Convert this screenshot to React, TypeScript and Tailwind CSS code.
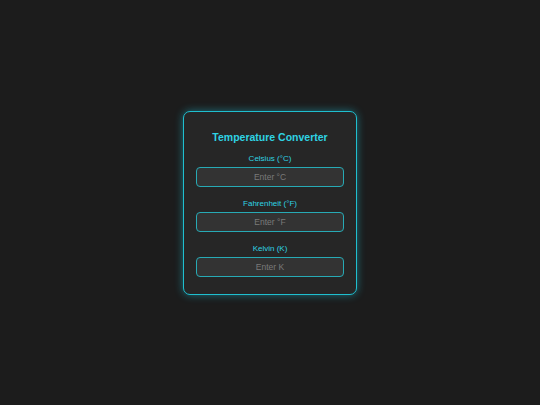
import React from 'react';

const FIELDS = [
  { label: 'Celsius (°C)', placeholder: 'Enter °C' },
  { label: 'Fahrenheit (°F)', placeholder: 'Enter °F' },
  { label: 'Kelvin (K)', placeholder: 'Enter K' },
];

export default function App() {
  return (
    <div
      className="min-h-screen w-full bg-[#1c1c1c] flex items-center justify-center"
      style={{ fontFamily: '"Liberation Sans", Arial, sans-serif' }}
    >
      <div className="w-[174px] rounded-[7px] border-[1.5px] border-[#1fbfcf] bg-[#262626] px-[12px] pt-[19px] pb-[17px] shadow-[0_0_8px_rgba(34,211,238,0.45)]">
        <h1 className="text-center text-[10.5px] leading-[13px] font-bold text-[#2fd3e3]">Temperature Converter</h1>

        <div className="mt-[10px] flex flex-col gap-[12px]">
          {FIELDS.map(f => (
            <div key={f.label} className="flex flex-col items-stretch">
              <label className="text-center text-[8px] leading-[10px] text-[#2fd3e3]">{f.label}</label>
              <input
                placeholder={f.placeholder}
                className="mt-[3px] h-[20px] w-full rounded-[4px] border-[1.5px] border-[#27aab5] bg-[#333333] text-center text-[8.5px] text-[#ddd] placeholder:text-[#7a7a7a] outline-none"
              />
            </div>
          ))}
        </div>
      </div>
    </div>
  );
}
